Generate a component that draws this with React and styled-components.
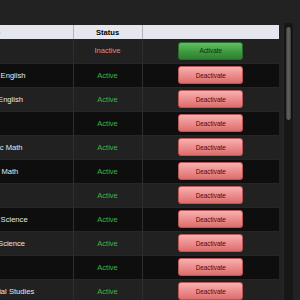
import React from 'react';
import styled, { createGlobalStyle, css } from 'styled-components';

const GlobalStyle = createGlobalStyle`
  html, body {
    margin: 0;
    padding: 0;
    background: #222222;
    font-family: "Liberation Sans", Arial, sans-serif;
  }
`;

const Page = styled.div`
  width: 300px;
  height: 300px;
  padding-top: 25px;
  box-sizing: border-box;
  overflow: hidden;
  display: flex;
  align-items: flex-start;
`;

const TableArea = styled.div`
  width: 283px;
  height: 275px;
  overflow: hidden;
  flex: none;
`;

const ScrollTrack = styled.div`
  width: 10px;
  height: 277px;
  margin-top: -2px;
  flex: none;
  background: #171717;
  border-left: 1px solid #262626;
  box-sizing: border-box;
  padding: 3px 1px 0;
  display: flex;
  flex-direction: column;
`;

const ScrollThumb = styled.div`
  height: 93px;
  border: 1px solid #121212;
  border-radius: 4px;
  background: linear-gradient(to right, #3b3b3b, #616161 40%, #575757 70%, #3a3a3a);
`;

const Table = styled.table`
  width: 309px;
  margin-left: -30px;
  border-collapse: collapse;
  table-layout: fixed;
  font-size: 7.6px;
`;

const HeadCell = styled.th`
  height: 14px;
  padding: 0 4px;
  background: #e6e6ef;
  color: #000;
  font-weight: bold;
  text-align: ${p => p.$align || 'center'};
  border-right: 1px solid #b4b4bc;
  &:last-child {
    border-right: none;
  }
`;

const Row = styled.tr`
  height: 24px;
  background: ${p => (p.$dark ? '#0e0e0e' : '#212121')};
  border-bottom: 1px solid #262626;
`;

const cellBase = css`
  padding: 0 4px;
  border-right: 1px solid #2e2e2e;
  white-space: nowrap;
  overflow: hidden;
`;

const NameCell = styled.td`
  ${cellBase};
  color: #e8e8e8;
  text-align: left;
`;

const StatusCell = styled.td`
  ${cellBase};
  text-align: center;
  color: ${p => (p.$active ? '#3fb63f' : '#e08a8a')};
`;

const ActionCell = styled.td`
  ${cellBase};
  border-right: none;
  text-align: center;
`;

const ActionButton = styled.button`
  width: 65px;
  height: 18px;
  padding: 0;
  border-radius: 3px;
  font-family: "Liberation Sans", Arial, sans-serif;
  font-size: 6.4px;
  vertical-align: middle;
  cursor: pointer;
  ${p =>
    p.$variant === 'activate'
      ? css`
          background: linear-gradient(to bottom, #5fbf5f, #3c963c 60%, #2f812f);
          border: 1px solid #2a6a2a;
          color: #0f2f0f;
        `
      : css`
          background: linear-gradient(to bottom, #f7b0b0, #ec8a8a 55%, #dc6d6d);
          border: 1px solid #b85555;
          color: #4a0c0c;
        `}
`;

const courses = [
  { name: 'Art', active: false },
  { name: 'Honors English', active: true },
  { name: 'Senior English', active: true },
  { name: 'Music', active: true },
  { name: 'Dynamic Math', active: true },
  { name: 'Applied Math', active: true },
  { name: 'Health', active: true },
  { name: 'Honors Science', active: true },
  { name: 'Senior Science', active: true },
  { name: 'Drama', active: true },
  { name: 'AP Social Studies', active: true },
  { name: 'World History', active: true }
];

function App() {
  return (
    <>
      <GlobalStyle />
      <Page>
        <TableArea>
          <Table>
            <colgroup>
              <col style={{ width: 103 }} />
              <col style={{ width: 69 }} />
              <col style={{ width: 137 }} />
            </colgroup>
            <thead>
              <tr>
                <HeadCell $align="left">Course</HeadCell>
                <HeadCell>Status</HeadCell>
                <HeadCell />
              </tr>
            </thead>
            <tbody>
              {courses.map((c, i) => (
                <Row key={c.name} $dark={i % 2 === 1}>
                  <NameCell>{c.name}</NameCell>
                  <StatusCell $active={c.active}>
                    {c.active ? 'Active' : 'Inactive'}
                  </StatusCell>
                  <ActionCell>
                    <ActionButton $variant={c.active ? 'deactivate' : 'activate'}>
                      {c.active ? 'Deactivate' : 'Activate'}
                    </ActionButton>
                  </ActionCell>
                </Row>
              ))}
            </tbody>
          </Table>
        </TableArea>
        <ScrollTrack>
          <ScrollThumb />
        </ScrollTrack>
      </Page>
    </>
  );
}

export default App;
